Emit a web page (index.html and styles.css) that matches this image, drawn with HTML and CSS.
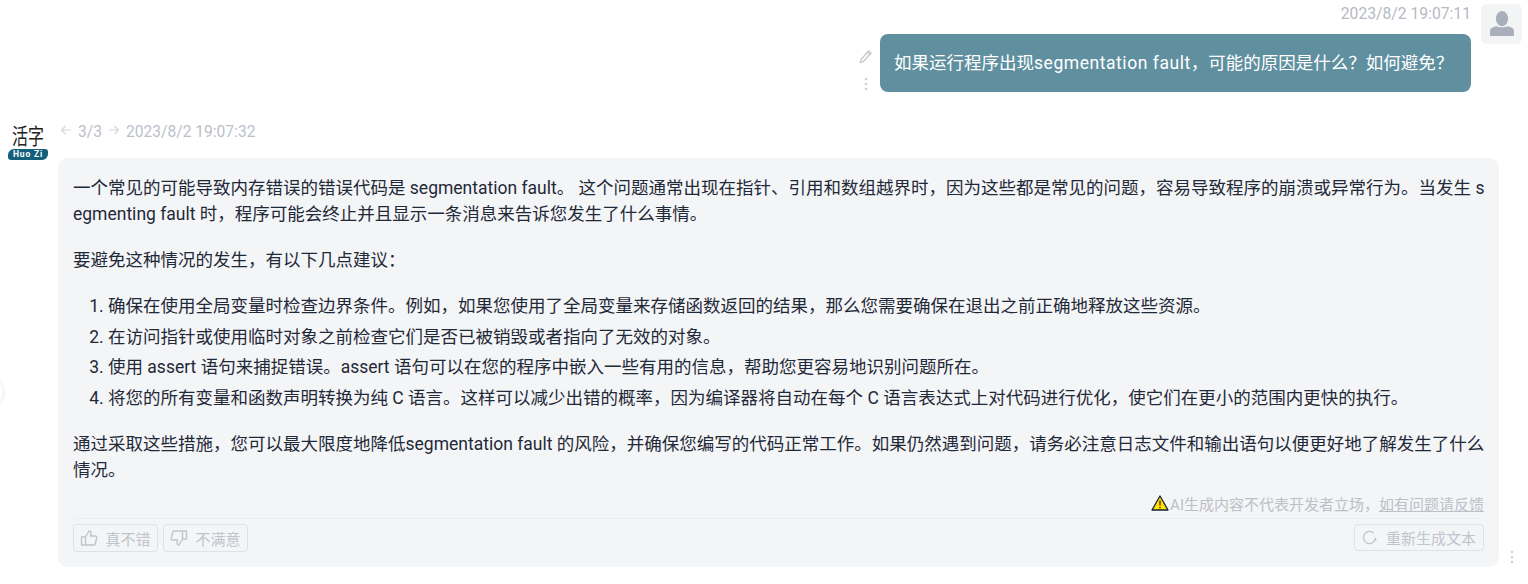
FILE: index.html
```html
<!DOCTYPE html>
<html lang="zh-CN">
<head>
    <meta charset="UTF-8">
    <meta name="viewport" content="width=device-width, initial-scale=1.0">
    <title>Huo Zi</title>
    <link rel="stylesheet" href="styles.css">
</head>
<body>
    <div class="side-handle"></div>
    <main class="chat">
        <section class="user-row">
            <div class="user-main">
                <div class="time">2023/8/2 19:07:11</div>
                <div class="user-line">
                    <div class="tools">
                        <svg class="tool-icon" viewBox="0 0 16 16"><path d="M3 11.500 10.500 3l2.500 2-7.500 8.500-3 1z" fill="none" stroke="#c9c9c9" stroke-width="1.400"/><path d="M9.500 4.200 12 6.400" stroke="#c9c9c9" stroke-width="1.200"/></svg>
                        <svg class="dots" viewBox="0 0 4 14"><circle cx="2" cy="2" r="1.300"/><circle cx="2" cy="7" r="1.300"/><circle cx="2" cy="12" r="1.300"/></svg>
                    </div>
                    <div class="user-bubble">如果运行程序出现<span class="latin">segmentation fault</span>，可能的原因是什么？如何避免？</div>
                </div>
            </div>
            <div class="user-avatar">
                <svg viewBox="0 0 24 24" width="26" height="28"><ellipse cx="12" cy="8" rx="5.600" ry="7" fill="#aab0bb"/><path d="M1 24v-5c0-2 2-3.300 6-4 1.500 1.300 8.500 1.300 10 0 4 .7 6 2 6 4v5z" fill="#aab0bb"/></svg>
            </div>
        </section>

        <section class="bot-row">
            <div class="logo">
                <div class="logo-mark">活字</div>
                <div class="logo-pill">Huo Zi</div>
            </div>
            <div class="bot-main">
                <div class="meta">
                    <svg class="arrow" viewBox="0 0 12 12"><path d="M11 6H1.500M5.500 2 1.500 6l4 4" fill="none" stroke="#d3d6dc" stroke-width="1.200"/></svg>
                    <span>3/3</span>
                    <svg class="arrow" viewBox="0 0 12 12"><path d="M1 6h9.500M6.500 2l4 4-4 4" fill="none" stroke="#d3d6dc" stroke-width="1.200"/></svg>
                    <span>2023/8/2 19:07:32</span>
                </div>
                <div class="bot-bubble">
                    <div class="answer">
                        <p>一个常见的可能导致内存错误的错误代码是 segmentation fault。 这个问题通常出现在指针、引用和数组越界时，因为这些都是常见的问题，容易导致程序的崩溃或异常行为。当发生 segmenting fault 时，程序可能会终止并且显示一条消息来告诉您发生了什么事情。</p>
                        <p>要避免这种情况的发生，有以下几点建议：</p>
                        <ol>
                            <li>确保在使用全局变量时检查边界条件。例如，如果您使用了全局变量来存储函数返回的结果，那么您需要确保在退出之前正确地释放这些资源。</li>
                            <li>在访问指针或使用临时对象之前检查它们是否已被销毁或者指向了无效的对象。</li>
                            <li>使用 assert 语句来捕捉错误。assert 语句可以在您的程序中嵌入一些有用的信息，帮助您更容易地识别问题所在。</li>
                            <li>将您的所有变量和函数声明转换为纯 C 语言。这样可以减少出错的概率，因为编译器将自动在每个 C 语言表达式上对代码进行优化，使它们在更小的范围内更快的执行。</li>
                        </ol>
                        <p>通过采取这些措施，您可以最大限度地降低segmentation fault 的风险，并确保您编写的代码正常工作。如果仍然遇到问题，请务必注意日志文件和输出语句以便更好地了解发生了什么情况。</p>
                    </div>
                    <div class="notice">
                        <svg class="warn" viewBox="0 0 18 16"><path d="M9 1 17 15H1z" fill="#ffe600" stroke="#12213a" stroke-width="1.300" stroke-linejoin="round"/><path d="M9 5.500v5" stroke="#7a2c00" stroke-width="1.500"/><circle cx="9" cy="12.600" r=".9" fill="#7a2c00"/></svg>
                        <span>AI生成内容不代表开发者立场，</span><a class="feedback">如有问题请反馈</a>
                    </div>
                    <div class="actions">
                        <div class="action-group">
                            <button class="btn">
                                <svg class="btn-icon" viewBox="0 0 18 16"><path d="M5.500 7v8H1.500V7zM5.500 7l3.500-6c1.500 0 2 1 2 2l-.5 3h5c1 0 1.500 1 1.200 2l-1.500 6c-.2.700-.7 1-1.400 1H5.500" fill="none" stroke="#bfc4cd" stroke-width="1.400" stroke-linejoin="round"/></svg>
                                真不错
                            </button>
                            <button class="btn">
                                <svg class="btn-icon" viewBox="0 0 18 16"><path d="M12.500 9V1h4v8zM12.500 9 9 15c-1.500 0-2-1-2-2l.5-3h-5c-1 0-1.500-1-1.200-2l1.500-6c.2-.7.7-1 1.400-1h8.300" fill="none" stroke="#bfc4cd" stroke-width="1.400" stroke-linejoin="round"/></svg>
                                不满意
                            </button>
                        </div>
                        <button class="btn btn-regen">
                            <svg class="btn-icon regen-icon" viewBox="0 0 16 16"><path d="M14 10.500A6.500 6.500 0 1 1 12.500 3.300" fill="none" stroke="#bfc4cd" stroke-width="1.400"/><path d="M14.800 7.500l-2.300 3 3 .6z" fill="#bfc4cd"/></svg>
                            重新生成文本
                        </button>
                    </div>
                </div>
            </div>
            <svg class="dots bot-dots" viewBox="0 0 4 14"><circle cx="2" cy="2" r="1.300"/><circle cx="2" cy="7" r="1.300"/><circle cx="2" cy="12" r="1.300"/></svg>
        </section>
    </main>
</body>
</html>
```

FILE: styles.css
```css
* {
    margin: 0;
    padding: 0;
    box-sizing: border-box;
}
html, body {
    height: 584px;
    overflow: hidden;
}
body {
    background-color: #fff;
    color: #1f2937;
    font-family: Roboto, "Noto Sans CJK SC", sans-serif;
    font-size: 17.500px;
    position: relative;
}
.side-handle {
    position: absolute;
    left: -22px;
    top: 379px;
    width: 25px;
    height: 27px;
    border-radius: 50%;
    background: #fff;
    box-shadow: 0 0 4px rgba(0, 0, 0, 0.12);
}
.chat {
    padding-top: 4px;
}

/* user message */
.user-row {
    display: flex;
    justify-content: flex-end;
    gap: 10px;
    padding-right: 6px;
}
.user-main {
    display: flex;
    flex-direction: column;
    align-items: flex-end;
}
.time {
    height: 30px;
    line-height: 20px;
    font-size: 15.700px;
    color: #b6bac3;
}
.user-line {
    display: flex;
    gap: 6px;
}
.tools {
    display: flex;
    flex-direction: column;
    align-items: center;
    justify-content: flex-end;
    gap: 13px;
    padding-bottom: 1px;
}
.tool-icon {
    width: 16px;
    height: 16px;
}
.dots {
    width: 4px;
    height: 14px;
    fill: #cfcfcf;
}
.user-bubble {
    height: 58px;
    line-height: 59px;
    padding: 0 14px;
    width: 591px;
    white-space: nowrap;
    border-radius: 8px;
    background-color: #60909f;
    color: #fff;
}
.latin {
    letter-spacing: 0.550px;
}
.user-avatar {
    width: 41px;
    height: 40px;
    border-radius: 6px;
    background-color: #f3f4f6;
    display: flex;
    justify-content: center;
    align-items: flex-end;
    padding-bottom: 7px;
}

/* bot message */
.bot-row {
    display: flex;
    gap: 10px;
    padding-left: 8px;
    margin-top: 30px;
    position: relative;
}
.logo {
    width: 40px;
    margin-top: 2px;
    display: flex;
    flex-direction: column;
    align-items: center;
}
.logo-mark {
    font-size: 16px;
    line-height: 25px;
    color: #222;
    transform: scaleY(1.350);
}
.logo-pill {
    width: 40px;
    height: 11px;
    border-radius: 6px 3px 6px 3px;
    background-color: #14607a;
    color: #fff;
    font-size: 8.500px;
    line-height: 11px;
    letter-spacing: 0.800px;
    font-weight: 700;
    text-align: center;
}
.bot-main {
    width: 1441px;
}
.meta {
    height: 36px;
    display: flex;
    align-items: flex-start;
    padding-left: 2px;
    gap: 6px;
    line-height: 20px;
    font-size: 15.600px;
    color: #bcc0c8;
}
.arrow {
    width: 12px;
    height: 12px;
    margin-top: 2px;
}
.bot-bubble {
    height: 409px;
    padding: 17px 15px 0;
    border-radius: 10px;
    background-color: #f4f5f7;
}
.answer {
    margin-right: -2px;
    line-height: 26px;
    word-break: break-all;
    color: #1f2937;
}
.answer p {
    margin-bottom: 20px;
}
.answer p:last-child {
    margin-bottom: 0;
}
.answer ol {
    padding-left: 35px;
    margin-bottom: 20px;
}
.answer li {
    margin-bottom: 4.700px;
}
.answer li:last-child {
    margin-bottom: 0;
}
.notice {
    display: flex;
    justify-content: flex-end;
    align-items: center;
    height: 20px;
    margin-top: 10px;
    font-size: 15px;
    color: #bcc0c8;
}
.warn {
    width: 18px;
    height: 16px;
    margin-right: 1px;
}
.feedback {
    text-decoration: underline;
}
.actions {
    display: flex;
    justify-content: space-between;
    margin-top: 5px;
    padding-top: 5px;
    border-top: 1px solid #eceef2;
}
.action-group {
    display: flex;
    gap: 5px;
}
.btn {
    width: 85px;
    height: 28px;
    display: flex;
    align-items: center;
    justify-content: center;
    gap: 7px;
    border: 1px solid #dfe1e6;
    border-radius: 4px;
    background: transparent;
    color: #bfc4cd;
    font-family: inherit;
    font-size: 15px;
    cursor: pointer;
}
.btn-icon {
    width: 18px;
    height: 16px;
}
.btn-regen {
    width: 130px;
    height: 27px;
}
.regen-icon {
    width: 15px;
    height: 15px;
    margin-right: 2px;
}
.bot-dots {
    position: absolute;
    left: 1510px;
    top: 428px;
}
```
